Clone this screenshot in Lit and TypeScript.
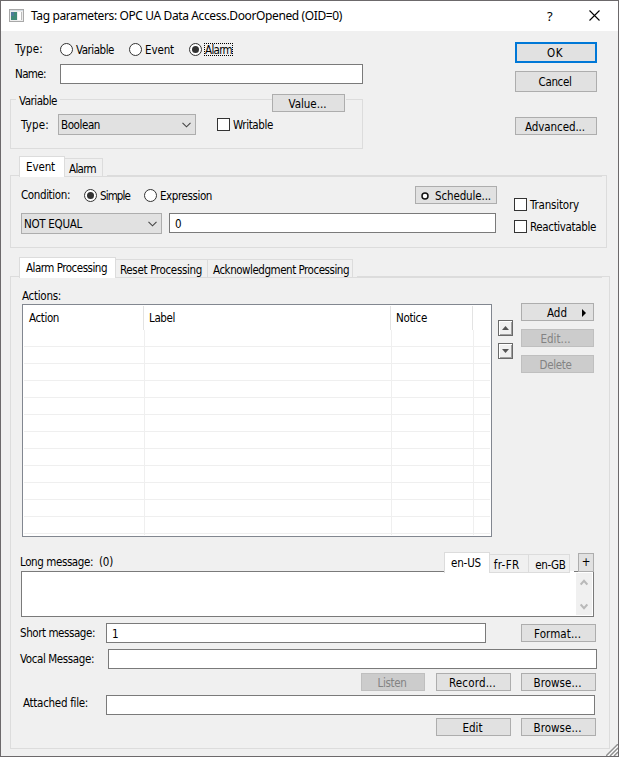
import { LitElement, html, css, svg } from "lit";
import { customElement, property, query } from "lit/decorators.js";

/** A caption whose tracking is adjusted so that it spans a given width. */
@customElement("ui-text")
class UiText extends LitElement {
  @property() text = "";
  @property({ type: Number }) span = 0;
  @query("span") private run!: HTMLSpanElement;
  static styles = css`
    :host { display: inline-block; white-space: pre; flex: none; }
    span { display: inline-block; }
  `;
  updated() {
    this.run.style.letterSpacing = "0px";
    const natural = this.run.getBoundingClientRect().width;
    const gap = (this.span + 1 - natural) / this.text.length;
    this.run.style.letterSpacing = `${gap.toFixed(3)}px`;
  }
  render() {
    return html`<span>${this.text}</span>`;
  }
}

const t = (text: string, span: number) => html`<ui-text .text=${text} .span=${span}></ui-text>`;

const radio = (label: string, span: number, on = false, focus = false) => html`
  <span class="option">
    <span class="radio ${on ? "on" : ""}"></span>
    <span class="caption ${focus ? "focus" : ""}">${t(label, span)}</span>
  </span>`;

const check = (label: string, span: number) => html`
  <span class="option"><span class="check"></span><span class="caption">${t(label, span)}</span></span>`;

const select = (label: string, span: number) => html`
  <div class="select">${t(label, span)}
    <svg width="9" height="6" viewBox="0 0 9 6">${svg`<path d="M.5 .8 4.5 4.8 8.5 .8" fill="none" stroke="#444" stroke-width="1.1"/>`}</svg>
  </div>`;

const chevron = (d: string) => html`
  <svg width="8" height="7" viewBox="0 0 8 7"><path d=${d} fill="none" stroke="#b9b9b9" stroke-width="2" /></svg>`;

@customElement("app-root")
class AppRoot extends LitElement {
  static styles = css`
    :host { display: block; width: 619px; height: 757px; overflow: hidden;
      font: 11.5px/14px "DejaVu Sans Condensed", "DejaVu Sans", sans-serif; color: #000; }
    * { box-sizing: border-box; }
    svg { display: block; flex: none; }
    .window { height: 757px; border: 1px solid #6c696b; background: #f0f0f0; position: relative; }
    .title { height: 30px; background: #fff; display: grid; align-items: center;
      grid-template-columns: 29px 1fr 10px 34px 11px 13px;
      font: 12px/16px "Noto Sans", "Open Sans", sans-serif; }
    .title ui-text { margin-left: 1px; }
    .app { margin-left: 8px; margin-top: -1px; }
    .help { font-size: 13px; margin: -1px 0 0 -3px; }
    .close { grid-column: 5; margin: -1px 0 0 -5px; }

    .top { display: grid; grid-template-columns: 353px 82px; column-gap: 152px; margin-left: 9px; height: 118px; }
    .types { display: grid; grid-template-columns: 50px 69px 60px 60px; height: 13px; margin-top: 11px; align-items: center; }
    .types > :first-child, .name > :first-child { margin-left: 5px; }
    .name { display: grid; grid-template-columns: 50px 303px; margin-top: 9px; height: 20px; align-items: center; }
    .option { display: flex; align-items: center; height: 13px; }
    .radio { width: 13px; height: 13px; border: 1px solid #333; border-radius: 50%; background: #fff; flex: none; display: grid; place-items: center; }
    .radio.on::after { content: ""; width: 7px; height: 7px; border-radius: 50%; background: #333; }
    .check { width: 13px; height: 13px; border: 1px solid #333; background: #fff; flex: none; }
    .caption { margin-left: 2px; padding: 0 1px; height: 13px; line-height: 14px; display: flex; }
    .focus { outline: 1px dotted #000; outline-offset: -1px; }
    .input { height: 20px; background: #fff; border: 1px solid #7a7a7a; display: flex; align-items: center; padding: 1px 0 0 5px; }
    .btn { height: 18px; background: #e1e1e1; border: 1px solid #adadad; display: flex; align-items: center; justify-content: center; padding: 1px 2px 0 0; }
    .btn.tall { height: 21px; }
    .btn.primary { border: 2px solid #0078d7; }
    .btn.off { background: #ccc; border-color: #bfbfbf; color: #838383; }
    .select { height: 21px; background: #e1e1e1; border: 1px solid #adadad; display: flex; align-items: center; justify-content: space-between; padding: 1px 4px 0 2px; }

    .group { height: 55px; margin-top: 10px; display: grid; grid-template-rows: 20px 21px;
      background: linear-gradient(#dcdcdc, #dcdcdc) 0 5px / 1px 100% no-repeat, linear-gradient(#dcdcdc, #dcdcdc) 100% 5px / 1px 100% no-repeat, linear-gradient(#dcdcdc, #dcdcdc) 0 5px / 100% 1px no-repeat, linear-gradient(#dcdcdc, #dcdcdc) 0 100% / 100% 1px no-repeat; }
    .legend { display: grid; grid-template-columns: 44px 75px; justify-content: space-between; padding: 0 17px 0 6px; }
    .legend > :first-child { background: #f0f0f0; padding-left: 3px; height: 14px; }
    .legend > :last-child { border-right: 1px solid #f0f0f0; }
    .legend .btn { width: 73px; margin-left: 1px; }
    .vartype { display: grid; grid-template-columns: 37px 138px 60px; padding-left: 11px; align-items: center; }
    .vartype .option { margin-left: 21px; }
    .side { padding-top: 11px; }
    .side .cancel { margin-top: 8px; }
    .side .advanced { margin-top: 25px; }

    .tabs { display: flex; align-items: flex-end; margin-left: 18px; height: 21px; position: relative; z-index: 1; }
    .tabs::after { content: ""; width: 4px; height: 1px; background: #f0f0f0; margin-bottom: 1px; }
    .tab { height: 19px; border: 1px solid #dcdcdc; border-left: 0; display: flex; padding: 3px 0 0 4px; background: #f0f0f0; }
    .tab.on { height: 21px; background: #fff; border-left: 1px solid #dcdcdc; border-bottom: 0; padding: 3px 0 0 6px; }
    .panel { border: 1px solid #dcdcdc; margin-left: 9px; margin-top: -2px; }
    .w46 { width: 46px; } .w38 { width: 38px; } .w97 { width: 97px; } .w92 { width: 92px; } .w145 { width: 145px; } .w40 { width: 40px; } .w41 { width: 41px; }

    .event-tabs { margin-top: 7px; }
    .event { width: 597px; height: 73px; display: grid; grid-template-columns: 475px 90px; column-gap: 18px; padding: 10px 0 0 10px;
      background: linear-gradient(#dcdcdc, #dcdcdc) 92px 0 / 499px 1px no-repeat; }
    .condition { display: grid; grid-template-columns: 63px 60px 271px 82px; height: 18px; align-items: center; }
    .schedule { gap: 6px; padding-right: 0; }
    .compare { display: grid; grid-template-columns: 141px 327px; column-gap: 7px; margin-top: 9px; }
    .flags { display: grid; grid-auto-rows: 13px; row-gap: 9px; padding-top: 12px; }

    .process-tabs { margin-top: 9px; height: 21px; }
    .process-tabs .w145 { padding-left: 5px; }
    .process { width: 600px; height: 473px; padding: 0 0 0 10px;
      background: linear-gradient(#dcdcdc, #dcdcdc) 342px 0 / 249px 1px no-repeat; }
    .actions-label { height: 14px; margin: 12px 0 0 1px; }
    .actions { display: grid; grid-template-columns: 470px 15px 73px; margin: 1px 0 0 1px; }
    .list { height: 233px; border: 1px solid #828790; background: #fff; padding: 1px; display: grid; grid-template-rows: 24px 1fr; }
    .head { display: grid; grid-template-columns: 120px 247px 82px 1fr; line-height: 25px; }
    .head > * { border-right: 1px solid #e3e3e3; padding-left: 5px; height: 24px; }
    .head > :last-child { border: 0; }
    .cells { display: grid; grid-template-columns: 121px 247px 82px 1fr; background: repeating-linear-gradient(#fff 0 16px, #efefef 16px 17px); }
    .cells > * { border-right: 1px solid #efefef; }
    .cells > :last-child { border: 0; }
    .movers { display: grid; grid-template-rows: 16px 16px; row-gap: 7px; padding-top: 16px; margin-left: 6px; width: 15px; }
    .mover { border: 1px solid #696969; background: #f0f0f0; box-shadow: inset 1px 1px #fff, inset -1px -1px #a0a0a0; display: grid; place-items: center; }
    .ops { display: grid; grid-auto-rows: 18px; row-gap: 8px; margin: -1px 0 0 14px; width: 73px; }
    .ops .off { padding-right: 4px; }
    .ops .add { justify-content: space-between; padding: 1px 7px 0 25px; }

    .long { display: grid; grid-template-columns: 79px 344px 127px 1fr; height: 20px; margin: 15px 0 0 -1px; align-items: start; position: relative; z-index: 1; width: 575px; }
    .long > ui-text { margin-top: 3px; }
    .locales { margin: 0 0 0 1px; width: 130px; }
    .locales::after { background: #fff; height: 2px; margin: 0; }
    .locales .w41 { padding-left: 6px; }
    .plus { width: 16px; height: 19px; margin: 1px 0 0 8px; background: #e1e1e1; border: 1px solid #adadad; line-height: 17px; text-align: center; }
    .area { width: 573px; height: 46px; margin-top: -1px; background: #fff; border: 1px solid #7a7a7a; display: flex; justify-content: flex-end; padding: 1px; }
    .scroll { width: 16px; background: #f0f0f0; display: flex; flex-direction: column; justify-content: space-between; align-items: center; padding: 6px 0 5px; }
    .short { display: grid; grid-template-columns: 85px 380px 75px; margin-top: 6px; align-items: center; }
    .short .btn { margin-left: 35px; width: 75px; }
    .short > ui-text, .vocal > ui-text { margin-left: -1px; }
    .vocal { display: grid; grid-template-columns: 87px 489px; margin-top: 6px; align-items: center; }
    .bar { display: flex; justify-content: flex-end; width: 575px; }
    .bar .btn { width: 75px; margin-left: 10px; }
    .bar .btn.off { width: 64px; }
    .bar .mid { margin-left: 11px; }
    .voice { margin-top: 4px; }
    .file { display: grid; grid-template-columns: 85px 489px; margin-top: 4px; align-items: center; }
    .file > ui-text { margin: -4px 0 0 2px; }
    .edit { margin-top: 3px; }
    .grip { position: absolute; right: 0; bottom: 0; }
  `;

  render() {
    return html`
      <div class="window">
        <div class="title">
          <svg class="app" width="15" height="13" viewBox="0 0 15 13">
            <rect x=".5" y=".5" width="14" height="12" fill="#eee" stroke="#a8a8a8" />
            <rect x="1" y="1" width="13" height="1" fill="#d3dbe2" />
            <rect x="2" y="3" width="6" height="8" fill="#3f8a78" />
            <rect x="2" y="3" width="3" height="4" fill="#4e7c9a" />
            <rect x="9" y="3" width="3" height="8" fill="#fff" />
            <rect x="12" y="3" width="1" height="8" fill="#bbb" />
          </svg>
          ${t("Tag parameters: OPC UA Data Access.DoorOpened (OID=0)", 310)}
          <span class="help">?</span>
          <svg class="close" width="11" height="11" viewBox="0 0 11 11"><path d="M.5 .5 10.5 10.5M10.5 .5 .5 10.5" stroke="#000" stroke-width="1.1" /></svg>
        </div>

        <div class="top">
          <div>
            <div class="types">
              ${t("Type:", 27)} ${radio("Variable", 37)} ${radio("Event", 28)} ${radio("Alarm", 26, true, true)}
            </div>
            <div class="name">${t("Name:", 30)}<div class="input"></div></div>
            <div class="group">
              <div class="legend"><span>${t("Variable", 37)}</span><div><div class="btn">${t("Value...", 37)}</div></div></div>
              <div class="vartype">${t("Type:", 27)} ${select("Boolean", 38)} ${check("Writable", 39)}</div>
            </div>
          </div>
          <div class="side">
            <div class="btn tall primary">${t("OK", 15)}</div>
            <div class="btn tall cancel">${t("Cancel", 32)}</div>
            <div class="btn advanced">${t("Advanced...", 59)}</div>
          </div>
        </div>

        <div class="tabs event-tabs">
          <div class="tab on w46">${t("Event", 28)}</div>
          <div class="tab w38">${t("Alarm", 26)}</div>
        </div>
        <div class="panel event">
          <div>
            <div class="condition">
              ${t("Condition:", 48)} ${radio("Simple", 29, true)} ${radio("Expression", 51)}
              <div class="btn schedule">
                <svg width="8" height="8" viewBox="0 0 8 8"><circle cx="4" cy="4" r="3" fill="#fff" stroke="#111" stroke-width="1.5" /></svg>
                ${t("Schedule...", 55)}
              </div>
            </div>
            <div class="compare">${select("NOT EQUAL", 57)}<div class="input">${t("0", 6)}</div></div>
          </div>
          <div class="flags">${check("Transitory", 48)} ${check("Reactivatable", 65)}</div>
        </div>

        <div class="tabs process-tabs">
          <div class="tab on w97">${t("Alarm Processing", 80)}</div>
          <div class="tab w92">${t("Reset Processing", 81)}</div>
          <div class="tab w145">${t("Acknowledgment Processing", 135)}</div>
        </div>
        <div class="panel process">
          <div class="actions-label">${t("Actions:", 38)}</div>
          <div class="actions">
            <div class="list">
              <div class="head">
                <span>${t("Action", 29)}</span><span>${t("Label", 25)}</span><span>${t("Notice", 30)}</span><span></span>
              </div>
              <div class="cells"><span></span><span></span><span></span><span></span></div>
            </div>
            <div class="movers">
              <div class="mover"><svg width="7" height="4" viewBox="0 0 7 4"><path d="M0 4 3.5 0 7 4Z" fill="#555" /></svg></div>
              <div class="mover"><svg width="7" height="4" viewBox="0 0 7 4"><path d="M0 0 3.5 4 7 0Z" fill="#555" /></svg></div>
            </div>
            <div class="ops">
              <div class="btn add">${t("Add", 19)}<svg width="4" height="8" viewBox="0 0 4 8"><path d="M0 0 4 4 0 8Z" /></svg></div>
              <div class="btn off">${t("Edit...", 29)}</div>
              <div class="btn off">${t("Delete", 31)}</div>
            </div>
          </div>

          <div class="long">
            ${t("Long message:", 72)} ${t("(0)", 13)}
            <div class="tabs locales">
              <div class="tab on w46">${t("en-US", 29)}</div>
              <div class="tab w40">${t("fr-FR", 25)}</div>
              <div class="tab w41">${t("en-GB", 29)}</div>
            </div>
            <div class="plus">+</div>
          </div>
          <div class="area">
            <div class="scroll">${chevron("M.7 5.5 4 1.8 7.3 5.5")} ${chevron("M.7 1.5 4 5.2 7.3 1.5")}</div>
          </div>
          <div class="short">${t("Short message:", 74)}<div class="input">${t("1", 6)}</div><div class="btn">${t("Format...", 46)}</div></div>
          <div class="vocal">${t("Vocal Message:", 73)}<div class="input"></div></div>
          <div class="bar voice">
            <div class="btn off">${t("Listen", 28)}</div>
            <div class="btn mid">${t("Record...", 46)}</div>
            <div class="btn">${t("Browse...", 47)}</div>
          </div>
          <div class="file">${t("Attached file:", 64)}<div class="input"></div></div>
          <div class="bar edit">
            <div class="btn mid">${t("Edit", 19)}</div>
            <div class="btn">${t("Browse...", 47)}</div>
          </div>
        </div>
        <svg class="grip" width="12" height="12" viewBox="0 0 12 12">
          <path d="M0 12 12 0M4 12 12 4M8 12 12 8" stroke="#8f8f8f" stroke-width="1.4" />
          <path d="M2 12 12 2M6 12 12 6" stroke="#fff" stroke-width="1" />
        </svg>
      </div>`;
  }
}
